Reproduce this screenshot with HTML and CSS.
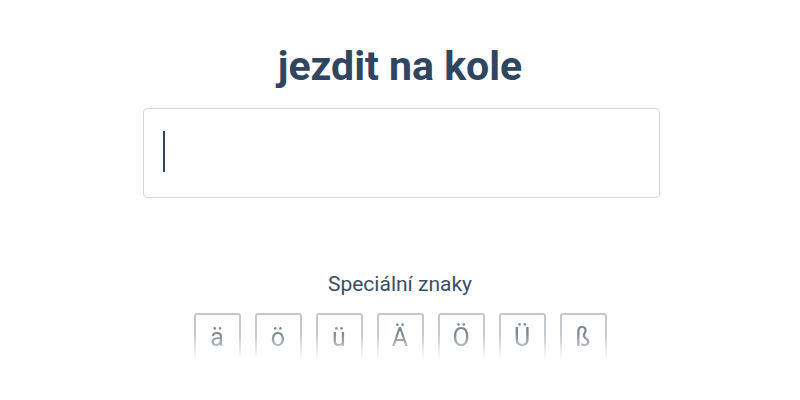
FILE: index.html
```html
<!DOCTYPE html>
<html lang="cs">
<head>
<meta charset="utf-8">
<link rel="stylesheet" href="styles.css">
</head>
<body>
<main class="page">
  <h1 class="title">jezdit na kole</h1>
  <div class="field">
    <input class="answer" type="text" aria-label="odpověď">
    <span class="caret"></span>
  </div>
  <p class="label">Speciální znaky</p>
  <div class="keys">
    <button class="key">ä</button>
    <button class="key">ö</button>
    <button class="key">ü</button>
    <button class="key">Ä</button>
    <button class="key">Ö</button>
    <button class="key">Ü</button>
    <button class="key">ß</button>
  </div>
</main>
</body>
</html>
```

FILE: styles.css
```css
html, body {
  margin: 0;
  padding: 0;
  background: #ffffff;
}
body {
  font-family: Roboto, "Liberation Sans", sans-serif;
  color: #2f4560;
}
.page {
  display: flex;
  flex-direction: column;
  align-items: center;
  padding-top: 40px;
}
.title {
  margin: 0;
  font-size: 41px;
  font-weight: 700;
  line-height: 52px;
  color: #2f4560;
}
.field {
  position: relative;
  margin-top: 16px;
  margin-left: 2px;
  width: 517px;
  height: 90px;
}
.answer {
  box-sizing: border-box;
  width: 100%;
  height: 100%;
  border: 1px solid #d6d6d6;
  border-radius: 4px;
  padding: 0 20px;
  font-family: inherit;
  font-size: 36px;
  color: #2f4560;
  outline: none;
  caret-color: transparent;
}
.caret {
  position: absolute;
  left: 20px;
  top: 23px;
  width: 2px;
  height: 41px;
  background: #2f4560;
}
.label {
  margin: 72px 0 0;
  font-size: 21px;
  line-height: 28px;
  color: #3a4e66;
}
.keys {
  display: flex;
  gap: 14px;
  margin-top: 15px;
  height: 46px;
  overflow: hidden;
  -webkit-mask-image: linear-gradient(to bottom, #000 45%, rgba(0,0,0,0.05) 100%);
  mask-image: linear-gradient(to bottom, #000 45%, rgba(0,0,0,0.05) 100%);
}
.key {
  box-sizing: border-box;
  width: 47px;
  height: 56px;
  border: 2px solid #c4c8cc;
  border-radius: 3px;
  background: #ffffff;
  font-family: inherit;
  font-size: 25px;
  color: #7d8790;
  padding: 8px 0 0;
  display: flex;
  justify-content: center;
  align-items: flex-start;
}
```
